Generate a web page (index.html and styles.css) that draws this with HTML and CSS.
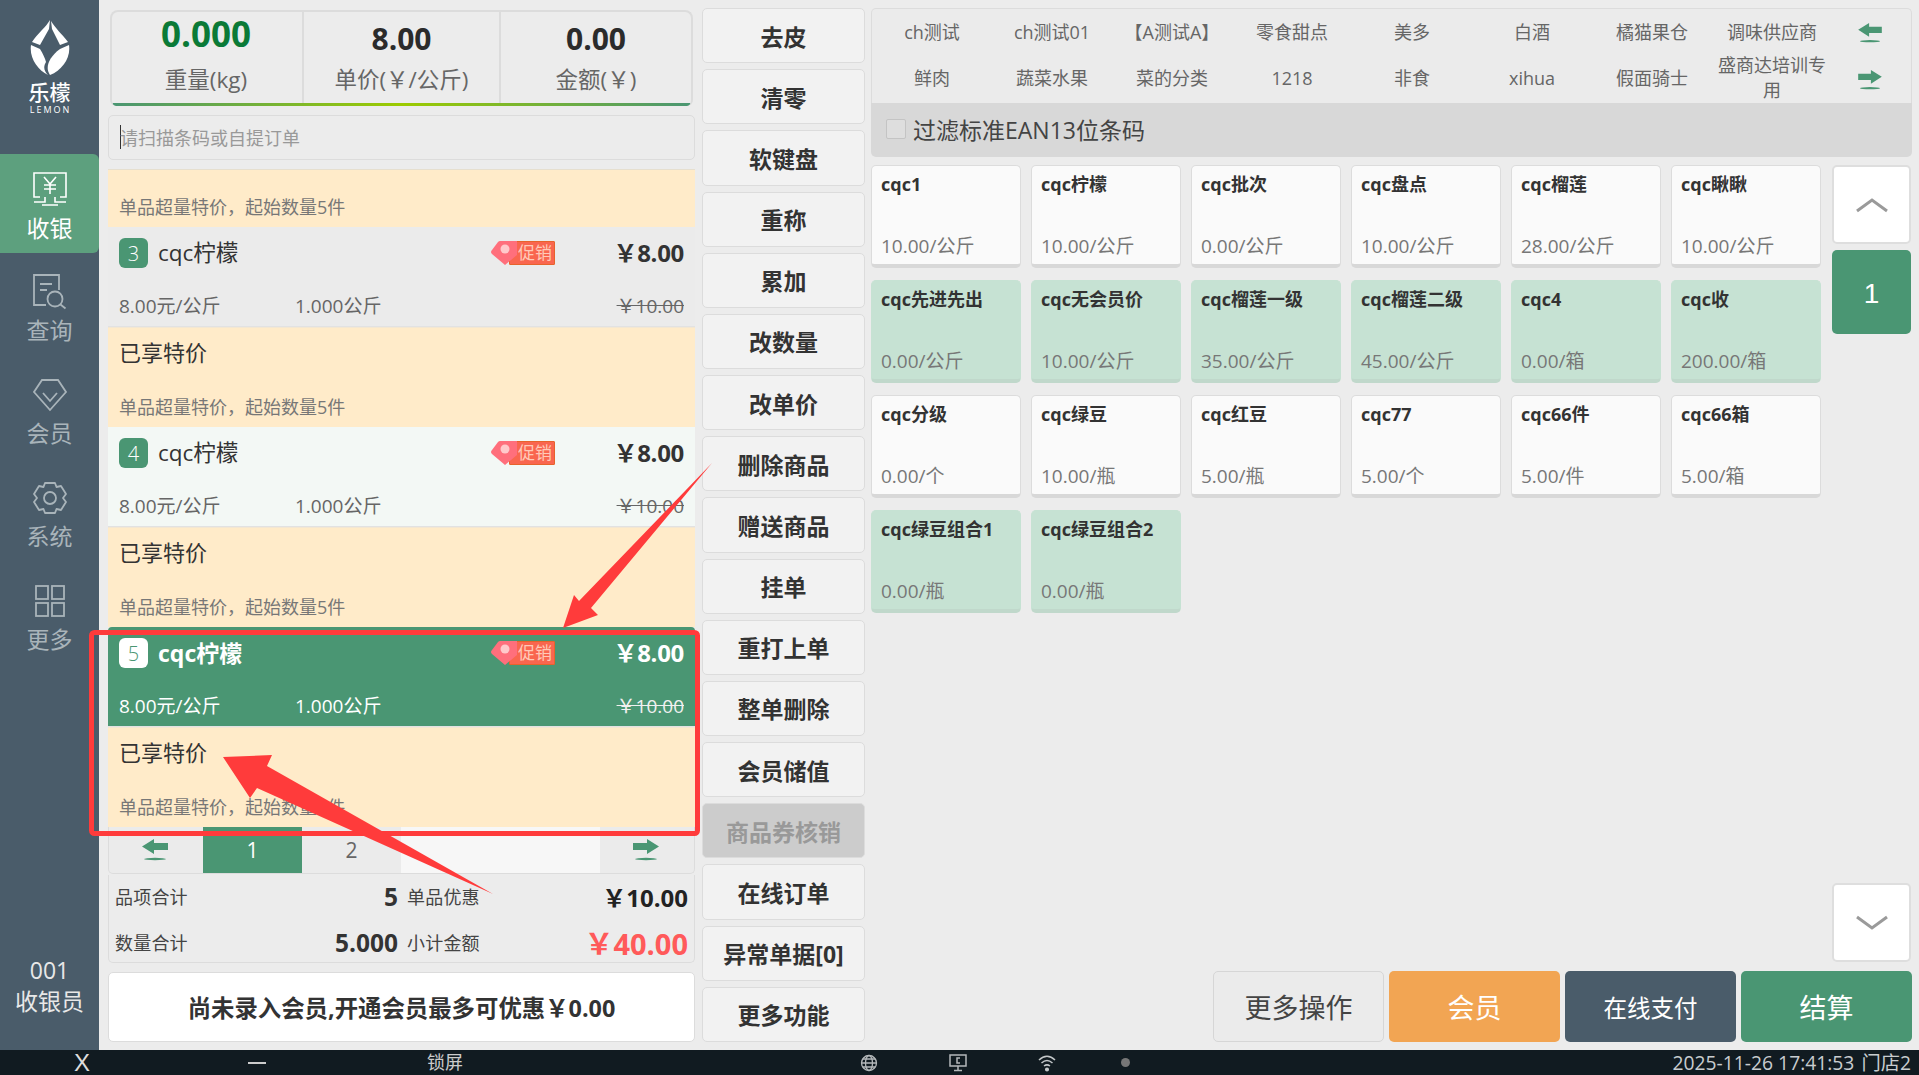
FILE: index.html
```html
<!DOCTYPE html>
<html lang="zh">
<head>
<meta charset="utf-8">
<title>乐檬收银</title>
<link rel="stylesheet" href="styles.css">
</head>
<body>
<div class="app">
  <div class="main">
    <aside class="sidebar">
      <div class="brand">
        <svg class="logo" viewBox="0 0 40 56" width="40" height="56">
          <path fill="#fff" d="M20 0C16 7 8 13 2 22l8 3L19 9Z"/>
          <path fill="#fff" d="M21 1C25 8 32 14 38 22l-8 3L22 9Z"/>
          <path fill="#fff" d="M1 25l9 4c3 5 5 9 6 13-3 5-2 9 2 13C8 50-1 38 1 25Z"/>
          <path fill="#fff" d="M39 25c2 13-7 25-19 30-5-7-2-17 10-26Z"/>
        </svg>
        <div class="brand-name">乐檬</div>
        <div class="brand-en">LEMON</div>
      </div>
      <nav class="nav">
        <a class="nav-item active">
          <svg width="36" height="34" viewBox="0 0 36 34" fill="none" stroke="currentColor" stroke-width="1.6"><path d="M8 25H2V1h32v24h-6"/><path d="M12 5l6 7 6-7M18 12v10M12 13h12M12 17h12"/><path d="M13 25v5H2M23 25v5h11M10 33h16"/></svg>
          <span>收银</span>
        </a>
        <a class="nav-item">
          <svg width="36" height="36" viewBox="0 0 36 36" fill="none" stroke="currentColor" stroke-width="1.8"><path d="M14 31H2V1h25v15"/><path d="M8 10h12M8 16h7"/><circle cx="23" cy="25" r="7.5"/><path d="M28.500 30.500l5 4"/></svg>
          <span>查询</span>
        </a>
        <a class="nav-item">
          <svg width="36" height="34" viewBox="0 0 36 34" fill="none" stroke="currentColor" stroke-width="1.8"><path d="M10 2h16l8 12-16 18L2 14Z"/><path d="M11 15l7 8 7-8"/></svg>
          <span>会员</span>
        </a>
        <a class="nav-item">
          <svg width="36" height="34" viewBox="0 0 36 34" fill="none" stroke="currentColor" stroke-width="1.8"><path d="M13 2h10l1.500 4 4.500-1 5 8-3 4 3 4-5 8-4.500-1-1.500 4H13l-1.500-4-4.500 1-5-8 3-4-3-4 5-8 4.500 1Z" stroke-linejoin="round"/><circle cx="18" cy="17" r="6"/></svg>
          <span>系统</span>
        </a>
        <a class="nav-item">
          <svg width="32" height="34" viewBox="0 0 32 34" fill="none" stroke="currentColor" stroke-width="1.8"><rect x="2" y="2" width="12" height="13"/><rect x="18" y="2" width="12" height="13"/><rect x="2" y="19" width="12" height="13"/><rect x="18" y="19" width="12" height="13"/></svg>
          <span>更多</span>
        </a>
      </nav>
      <div class="cashier"><div>001</div><div>收银员</div></div>
    </aside>

    <section class="left">
      <div class="scale">
        <div class="scale-cell"><div class="scale-val weight">0.000</div><div class="scale-lab">重量(kg)</div></div>
        <div class="scale-cell"><div class="scale-val">8.00</div><div class="scale-lab">单价(￥/公斤)</div></div>
        <div class="scale-cell"><div class="scale-val">0.00</div><div class="scale-lab">金额(￥)</div></div>
      </div>
      <div class="scan"><span class="caret"></span><span>请扫描条码或自提订单</span></div>
      <div class="list">
        <div class="promo first"><div class="promo-sub">单品超量特价，起始数量5件</div></div>

        <div class="item">
          <div class="item-top"><span class="badge">3</span><span class="name">cqc柠檬</span><span class="tag"><svg width="28" height="24" viewBox="0 0 28 24"><path fill="#ff6f7c" d="M9 0h17v14L14 24 1 13Q-1 11 1 9L7 1Q8 0 9 0Z"/><circle cx="14" cy="8" r="4.500" fill="#ffc9cb"/></svg><span class="tag-text">促销</span></span><span class="price">￥8.00</span></div>
          <div class="item-sub"><span class="unit">8.00元/公斤</span><span class="qty">1.000公斤</span><span class="old">￥10.00</span></div>
        </div>
        <div class="promo"><div class="promo-title">已享特价</div><div class="promo-sub">单品超量特价，起始数量5件</div></div>

        <div class="item light">
          <div class="item-top"><span class="badge">4</span><span class="name">cqc柠檬</span><span class="tag"><svg width="28" height="24" viewBox="0 0 28 24"><path fill="#ff6f7c" d="M9 0h17v14L14 24 1 13Q-1 11 1 9L7 1Q8 0 9 0Z"/><circle cx="14" cy="8" r="4.500" fill="#ffc9cb"/></svg><span class="tag-text">促销</span></span><span class="price">￥8.00</span></div>
          <div class="item-sub"><span class="unit">8.00元/公斤</span><span class="qty">1.000公斤</span><span class="old">￥10.00</span></div>
        </div>
        <div class="promo"><div class="promo-title">已享特价</div><div class="promo-sub">单品超量特价，起始数量5件</div></div>

        <div class="item selected">
          <div class="item-top"><span class="badge">5</span><span class="name">cqc柠檬</span><span class="tag"><svg width="28" height="24" viewBox="0 0 28 24"><path fill="#ff6f7c" d="M9 0h17v14L14 24 1 13Q-1 11 1 9L7 1Q8 0 9 0Z"/><circle cx="14" cy="8" r="4.500" fill="#ffc9cb"/></svg><span class="tag-text">促销</span></span><span class="price">￥8.00</span></div>
          <div class="item-sub"><span class="unit">8.00元/公斤</span><span class="qty">1.000公斤</span><span class="old">￥10.00</span></div>
        </div>
        <div class="promo"><div class="promo-title">已享特价</div><div class="promo-sub">单品超量特价，起始数量5件</div></div>
      </div>
      <div class="pager">
        <span class="pg-arrow"><svg width="28" height="22" viewBox="0 0 28 22"><path fill="#4a9673" d="M13 0v4h14v7H13v4L1 7.500Z"/><ellipse cx="14" cy="20" rx="11" ry="1.200" fill="#4a9673"/></svg></span>
        <span class="pg-num on">1</span>
        <span class="pg-num">2</span>
        <span class="pg-blank"></span>
        <span class="pg-arrow"><svg width="28" height="22" viewBox="0 0 28 22"><path fill="#4a9673" d="M15 0v4H1v7h14v4l12-7.500Z"/><ellipse cx="14" cy="20" rx="11" ry="1.200" fill="#4a9673"/></svg></span>
      </div>
      <div class="summary">
        <div class="sum-lab">品项合计</div><div class="sum-val small">5</div><div class="sum-lab mid-lab">单品优惠</div><div class="sum-money">￥10.00</div>
        <div class="sum-lab">数量合计</div><div class="sum-val">5.000</div><div class="sum-lab mid-lab">小计金额</div><div class="sum-money red">￥40.00</div>
      </div>
      <div class="member-bar">尚未录入会员,开通会员最多可优惠￥0.00</div>
    </section>

    <section class="mid">
      <button class="fn">去皮</button>
      <button class="fn">清零</button>
      <button class="fn">软键盘</button>
      <button class="fn">重称</button>
      <button class="fn">累加</button>
      <button class="fn">改数量</button>
      <button class="fn">改单价</button>
      <button class="fn">删除商品</button>
      <button class="fn">赠送商品</button>
      <button class="fn">挂单</button>
      <button class="fn">重打上单</button>
      <button class="fn">整单删除</button>
      <button class="fn">会员储值</button>
      <button class="fn off">商品券核销</button>
      <button class="fn">在线订单</button>
      <button class="fn">异常单据[0]</button>
      <button class="fn">更多功能</button>
    </section>

    <section class="right">
      <div class="cats">
        <div class="cat-grid">
          <span>ch测试</span><span>ch测试01</span><span>【A测试A】</span><span>零食甜点</span><span>美多</span><span>白酒</span><span>橘猫果仓</span><span>调味供应商</span>
          <span>鲜肉</span><span>蔬菜水果</span><span>菜的分类</span><span>1218</span><span>非食</span><span>xihua</span><span>假面骑士</span><span>盛商达培训专用</span>
        </div>
        <div class="cat-arrows">
          <svg width="26" height="20" viewBox="0 0 28 22"><path fill="#4a9673" d="M13 0v4h14v7H13v4L1 7.500Z"/><ellipse cx="14" cy="20" rx="11" ry="1.200" fill="#4a9673"/></svg>
          <svg width="26" height="20" viewBox="0 0 28 22"><path fill="#4a9673" d="M15 0v4H1v7h14v4l12-7.500Z"/><ellipse cx="14" cy="20" rx="11" ry="1.200" fill="#4a9673"/></svg>
        </div>
      </div>
      <div class="filter"><span class="check"></span><span>过滤标准EAN13位条码</span></div>
      <div class="products">
        <div class="prod-grid">
          <div class="card"><b>cqc1</b><span>10.00/公斤</span></div>
          <div class="card"><b>cqc柠檬</b><span>10.00/公斤</span></div>
          <div class="card"><b>cqc批次</b><span>0.00/公斤</span></div>
          <div class="card"><b>cqc盘点</b><span>10.00/公斤</span></div>
          <div class="card"><b>cqc榴莲</b><span>28.00/公斤</span></div>
          <div class="card"><b>cqc瞅瞅</b><span>10.00/公斤</span></div>
          <div class="card tint"><b>cqc先进先出</b><span>0.00/公斤</span></div>
          <div class="card tint"><b>cqc无会员价</b><span>10.00/公斤</span></div>
          <div class="card tint"><b>cqc榴莲一级</b><span>35.00/公斤</span></div>
          <div class="card tint"><b>cqc榴莲二级</b><span>45.00/公斤</span></div>
          <div class="card tint"><b>cqc4</b><span>0.00/箱</span></div>
          <div class="card tint"><b>cqc收</b><span>200.00/箱</span></div>
          <div class="card"><b>cqc分级</b><span>0.00/个</span></div>
          <div class="card"><b>cqc绿豆</b><span>10.00/瓶</span></div>
          <div class="card"><b>cqc红豆</b><span>5.00/瓶</span></div>
          <div class="card"><b>cqc77</b><span>5.00/个</span></div>
          <div class="card"><b>cqc66件</b><span>5.00/件</span></div>
          <div class="card"><b>cqc66箱</b><span>5.00/箱</span></div>
          <div class="card tint"><b>cqc绿豆组合1</b><span>0.00/瓶</span></div>
          <div class="card tint"><b>cqc绿豆组合2</b><span>0.00/瓶</span></div>
        </div>
        <div class="side">
          <div class="side-btn"><svg width="34" height="16" viewBox="0 0 34 16" fill="none" stroke="#9a9a9a" stroke-width="3"><path d="M2 14L17 3l15 11"/></svg></div>
          <div class="side-num">1</div>
          <div class="side-space"></div>
          <div class="side-btn"><svg width="34" height="16" viewBox="0 0 34 16" fill="none" stroke="#9a9a9a" stroke-width="3"><path d="M2 2l15 11L32 2"/></svg></div>
        </div>
      </div>
      <div class="actions">
        <button class="act plain">更多操作</button>
        <button class="act orange">会员</button>
        <button class="act slate">在线支付</button>
        <button class="act green">结算</button>
      </div>
    </section>
  </div>

  <footer class="bar">
    <span class="bar-x">X</span>
    <span class="bar-min"></span>
    <span class="bar-lock">锁屏</span>
    <svg class="bar-globe" width="18" height="18" viewBox="0 0 18 18" fill="none" stroke="#b4b8ba" stroke-width="1.300"><circle cx="9" cy="9" r="7.500"/><ellipse cx="9" cy="9" rx="3.500" ry="7.500"/><path d="M1.500 9h15M2.500 5h13M2.500 13h13"/></svg>
    <svg class="bar-pc" width="20" height="18" viewBox="0 0 20 18" fill="none" stroke="#b4b8ba" stroke-width="1.500"><rect x="2" y="1" width="16" height="11"/><path d="M12 4H9v5h3M10 12v4M6 16.500h8"/></svg>
    <svg class="bar-wifi" width="20" height="18" viewBox="0 0 20 18" fill="none" stroke="#c4c8ca" stroke-width="1.500"><path d="M2 6c5-5 11-5 16 0M4.500 9c4-3.500 7-3.500 11 0M7 12c2-1.500 4-1.500 6 0"/><circle cx="10" cy="15.500" r="1.300" fill="#c4c8ca"/></svg>
    <span class="bar-dot"></span>
    <span class="bar-time">2025-11-26 17:41:53</span>
    <span class="bar-store">门店2</span>
  </footer>

  <svg class="marks" width="1919" height="1075" viewBox="0 0 1919 1075">
    <rect x="91.500" y="632.500" width="606" height="201" rx="3" fill="none" stroke="#ff3b3b" stroke-width="5"/>
    <polygon fill="#ff3b3b" points="712,463 591,608 598,615 563,628 574,595 579,601"/>
    <polygon fill="#ff3b3b" points="223,757 272,755 267,766 493,894 257,788 250,798"/>
  </svg>
</div>
</body>
</html>
```
FILE: styles.css
```css
* { box-sizing: border-box; }
html, body { margin: 0; padding: 0; }
body {
  width: 1919px; height: 1075px; overflow: hidden; background: #ececec;
  font-family: "Open Sans", "Noto Sans CJK SC", sans-serif; color: #333;
}
.app { position: relative; width: 1919px; height: 1075px; display: flex; flex-direction: column; overflow: hidden; }
.main { display: flex; height: 1050px; }

/* sidebar */
.sidebar { width: 99px; flex: none; background: #4a5c6a; display: flex; flex-direction: column; }
.brand { height: 154px; padding-top: 20px; display: flex; flex-direction: column; align-items: center; color: #fff; }
.logo { display: block; margin-left: 0; }
.brand-name { font-size: 21px; line-height: 26px; margin-top: 3px; font-weight: 500; }
.brand-en { font-size: 9px; line-height: 10px; letter-spacing: 2px; margin-left: 2px; }
.nav { display: flex; flex-direction: column; flex: 1; }
.nav-item { height: 103px; padding-top: 17px; display: flex; flex-direction: column; align-items: center; color: #a9b4ba; font-size: 23px; line-height: 30px; }
.nav-item svg { height: 36px; margin-bottom: 5px; flex: none; }
.nav-item.active { height: 99px; margin-bottom: 4px; padding-top: 17px; background: #5da07e; color: #fff; border-radius: 0 6px 6px 0; }
.nav-item.active svg { margin-bottom: 6px; }
.cashier { height: 95px; color: #e8e8e8; font-size: 23px; line-height: 31px; text-align: center; }

/* left column */
.left { width: 587px; flex: none; margin-left: 9px; padding-top: 10px; }
.scale {
  margin: 0 2px; height: 96px; display: flex; border: 2px solid #dcdcdc; border-bottom: 0; border-radius: 8px 8px 6px 6px; position: relative; overflow: hidden;
  background: #ececec;
}
.scale::after { content: ""; position: absolute; left: 0; right: 0; bottom: 0; height: 3px; background: linear-gradient(90deg, #4a9673, #9ccb00 50%, #4a9673); }
.scale-cell { flex: 1; text-align: center; border-left: 2px solid #dcdcdc; }
.scale-cell:first-child { border-left: 0; flex: none; width: 192px; margin-left: -2px; }
.scale-cell:nth-child(2) { flex: none; width: 197px; }
.scale-val { font-size: 30px; font-weight: 700; color: #2b2b2b; line-height: 40px; height: 50px; padding-top: 7px; }
.scale-val.weight { font-size: 35px; color: #0a7a37; padding-top: 0; line-height: 44px; }
.scale-lab { font-size: 22.500px; line-height: 32px; color: #666; margin-top: 2px; }
.scan {
  margin-top: 9px; height: 45px; border: 1px solid #dcdcdc; border-radius: 5px; display: flex; align-items: center; padding: 0 0 2px 11px;
  font-size: 18px; color: #999;
}
.caret { width: 1px; height: 24px; background: #333; margin-right: -1px; }
.list { margin-top: 9px; height: 658px; overflow: hidden; display: flex; flex-direction: column; }
.promo { height: 100px; background: #ffebc9; padding: 8px 11px 0; flex: none; position: relative; border-top: 1px solid #f3e7d2; }
.promo.first { height: 58px; padding-top: 0; border-top: 1px solid #e6dfcf; }
.promo-title { font-size: 22px; line-height: 32px; color: #333; }
.promo-sub { font-size: 18px; line-height: 26px; color: #777; position: absolute; left: 11px; bottom: 7px; }
.item { height: 100px; flex: none; background: #ebebeb; color: #333; padding: 10px 11px 0; border-bottom: 1px solid #e2e2e2; }
.item.light { background: #f3f8f5; }
.item.selected { background: #4a9673; color: #fff; border-radius: 4px 4px 0 0; }
.item-top { display: flex; align-items: center; height: 32px; }
.badge { width: 29px; height: 30px; border-radius: 6px; background: #4a9673; color: #fff; font-size: 20px; display: flex; align-items: center; justify-content: center; font-weight: 300; flex: none; }
.selected .badge { background: #fff; color: #4a9673; }
.name { font-size: 22.500px; margin-left: 10px; flex: none; line-height: 32px; }
.selected .name { font-weight: 700; font-size: 23px; }
.tag { margin-left: auto; display: flex; align-items: center; height: 24px; position: relative; margin-right: 28px; }
.tag svg { position: relative; z-index: 1; display: block; margin-right: -10px; }
.tag-text { width: 46px; height: 24px; background: #f9664f; border: 1px solid #e7632c; color: #ffc9b8; font-size: 17px; line-height: 22px; text-align: right; padding-right: 2px; border-radius: 1px; }
.price { font-size: 24px; font-weight: 700; margin-left: 0; text-align: right; flex: none; line-height: 32px; width: 101px; letter-spacing: -0.3px; }
.item-sub { display: flex; align-items: center; font-size: 19px; margin-top: 24px; line-height: 26px; color: #666; }
.selected .item-sub { color: #fff; }
.unit { width: 176px; }
.old { margin-left: auto; text-decoration: line-through; }
.selected .old { color: #f0f0f0; }

.pager { height: 47px; display: flex; background: #ebebeb; border: 1px solid #dcdcdc; border-top: 0; border-radius: 0 0 5px 5px; }
.pg-arrow { width: 94px; display: flex; align-items: center; justify-content: center; flex: none; padding-right: 2px; }
.pg-num { width: 99px; display: flex; align-items: center; justify-content: center; font-size: 21px; color: #666; flex: none; }
.pg-num.on { background: #4a9673; color: #fff; }
.pg-blank { flex: 1; background: #f7f7f7; }
.summary {
  height: 88px; margin-top: 1px; border: 1px solid #dcdcdc; border-top: 0; border-radius: 0 0 5px 5px;
  display: grid; grid-template-columns: 85px 198px 87px 1fr; grid-template-rows: 42px 42px; row-gap: 4px; align-items: center; padding: 0 6px;
}
.sum-lab { font-size: 18px; color: #444; letter-spacing: 0.2px; }
.mid-lab { padding-left: 9px; }
.sum-val { font-size: 24.500px; font-weight: 700; text-align: right; color: #333; }
.sum-money { font-size: 24px; font-weight: 700; text-align: right; color: #222; }
.sum-money.red { font-size: 29px; color: #ff5a5a; }
.member-bar {
  margin-top: 9px; height: 70px; background: #fff; border: 1px solid #dcdcdc; border-radius: 5px; display: flex; align-items: center; justify-content: center;
  font-size: 23.400px; font-weight: 700; color: #333;
}

/* middle */
.mid { width: 163px; flex: none; margin-left: 7px; padding-top: 8px; height: 1042px; display: flex; flex-direction: column; gap: 6px; }
.fn {
  flex: 1; min-height: 0; padding: 0; background: #f2f2f2; border: 1px solid #dcdcdc; border-radius: 5px; color: #333;
  font-family: inherit; font-size: 23px; font-weight: 700;
}
.fn.off { background: #cccccc; color: #999; }

/* right */
.right { width: 1041px; flex: none; margin-left: 6px; padding-top: 8px; }
.cats { height: 95px; display: flex; background: #ebebeb; border: 1px solid #dcdcdc; border-bottom: 0; border-radius: 5px 5px 0 0; }
.cat-grid { width: 960px; display: grid; grid-template-columns: repeat(8, 120px); grid-template-rows: 46px 46px; align-items: center; justify-items: center; font-size: 18px; color: #666; line-height: 25px; text-align: center; }
.cat-grid span { max-width: 112px; }
.cat-arrows { flex: 1; display: flex; flex-direction: column; align-items: center; justify-content: space-around; padding: 0 4px 0 0; }
.filter { height: 54px; background: #d8d8d8; border-radius: 0 0 5px 5px; display: flex; align-items: center; padding: 0 0 2px 15px; font-size: 23px; color: #444; gap: 7px; }
.check { width: 20px; height: 20px; border: 1px solid #c4c4c4; background: #dedede; border-radius: 2px; }
.products { display: flex; margin-top: 8px; height: 797px; }
.prod-grid { width: 950px; display: grid; grid-template-columns: repeat(6, 150px); grid-auto-rows: 103px; gap: 12px 10px; align-content: start; }
.card {
  background: #fafafa; border-radius: 5px; padding: 5px 9px 5px; display: flex; flex-direction: column; justify-content: space-between;
  border: 1px solid #dcdcdc; border-bottom: 4px solid #d8d8d8;
  font-size: 19px; line-height: 26px; color: #777;
}
.card b { color: #333; font-weight: 700; font-size: 18px; }
.card.tint { background: #c6e2d3; border-color: #c6e2d3; border-bottom-color: #c0d8cb; }
.side { width: 79px; margin-left: 11px; display: flex; flex-direction: column; }
.side-btn { height: 79px; background: #fff; border: 2px solid #dedede; border-radius: 5px; display: flex; align-items: center; justify-content: center; flex: none; }
.side-num { height: 84px; margin-top: 6px; padding-top: 3px; background: #4a9673; color: #fff; font-size: 28px; border-radius: 5px; display: flex; align-items: center; justify-content: center; flex: none; font-family: "Liberation Sans", sans-serif; }
.side-space { flex: 1; }
.actions { display: flex; justify-content: flex-end; gap: 5px; margin-top: 9px; height: 71px; padding-right: 0; }
.act { width: 171px; height: 71px; border-radius: 5px; border: 1px solid transparent; font-family: inherit; font-size: 27px; color: #fff; padding: 0; }
.act.plain { background: #ebebeb; border-color: #d6d6d6; color: #444; }
.act.orange { background: #f2a553; }
.act.slate { background: #4a5c6a; font-size: 23.500px; }
.act.green { background: #4a9673; }

/* bottom */
.bar { height: 25px; background: #111b21; color: #c8cccf; display: flex; align-items: center; font-size: 19.300px; line-height: 25px; position: relative; }
.bar-x { margin-left: 72px; font-size: 24px; line-height: 25px; width: 20px; text-align: center; color: #ddd; font-family: "Liberation Sans", sans-serif; }
.bar-min { margin-left: 156px; width: 18px; height: 2px; background: #ccc; }
.bar-lock { margin-left: 161px; width: 36px; white-space: nowrap; color: #ccc; font-size: 18px; }
.bar-globe { margin-left: 397px; flex: none; }
.bar-pc { margin-left: 70px; flex: none; }
.bar-wifi { margin-left: 69px; flex: none; }
.bar-dot { margin-left: 64px; width: 9px; height: 9px; border-radius: 50%; background: #777; flex: none; }
.bar-time { margin-left: auto; white-space: nowrap; }
.bar-store { margin-left: 7px; margin-right: 8px; white-space: nowrap; }

/* annotation drawn on the screenshot */
.marks { position: absolute; left: 0; top: 0; pointer-events: none; }
```
